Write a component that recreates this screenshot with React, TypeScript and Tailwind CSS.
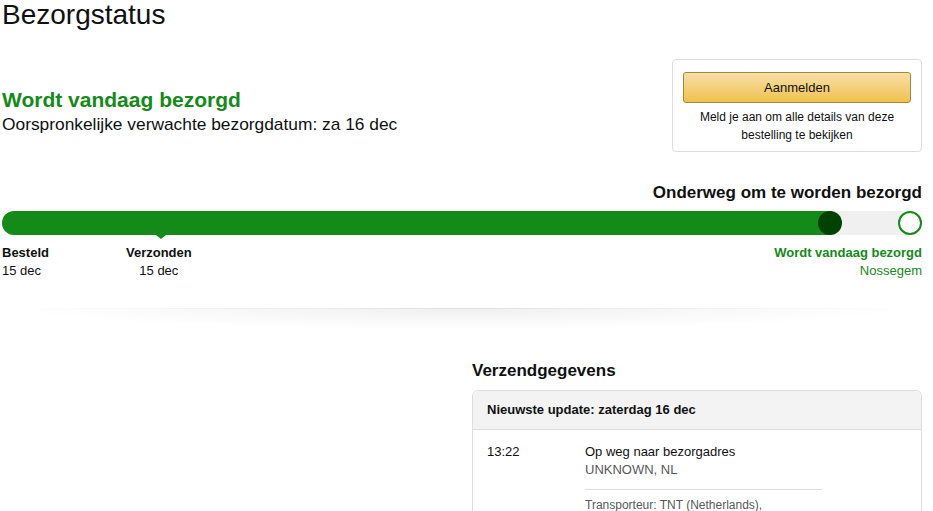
import React from 'react';

const GREEN = 'text-[#148a18]';

const Milestone: React.FC<{ title: string; date: string; className?: string }> = ({ title, date, className }) => (
  <div className={`flex flex-col text-[13px] leading-[18px] text-[#0f1111] ${className ?? ''}`}>
    <span className="font-bold">{title}</span>
    <span>{date}</span>
  </div>
);

export default function App() {
  return (
    <div className="bg-white h-[511px] overflow-hidden font-['Liberation_Sans',Arial,sans-serif] text-[#0f1111]">
      <div className="ml-[2px] w-[920px]">
        {/* Titel */}
        <h1 className="text-[28px] leading-[30px]">Bezorgstatus</h1>

        {/* Status + aanmelden */}
        <div className="flex justify-between mt-[29px]">
          <div className="pt-[28px]">
            <div className={`text-[21px] leading-[26px] font-bold ${GREEN}`}>Wordt vandaag bezorgd</div>
            <div className="text-[17.35px] leading-[22px]">Oorspronkelijke verwachte bezorgdatum: za 16 dec</div>
          </div>
          <div className="w-[250px] h-[93px] border border-[#dddddd] rounded-[4px] px-[10px] pt-[12px]">
            <button className="w-full h-[31px] rounded-[3px] border border-[#a88734] bg-gradient-to-b from-[#f7dfa5] to-[#f0c14b] text-[13px] text-[#111]">
              Aanmelden
            </button>
            <p className="text-[12px] leading-[18px] text-center mt-[5px]">
              Meld je aan om alle details van deze bestelling te bekijken
            </p>
          </div>
        </div>

        {/* Voortgang */}
        <div className="mt-[30px]">
          <div className="text-right text-[17px] leading-[22px] font-bold">Onderweg om te worden bezorgd</div>
          <div className="relative mt-[7px] h-[24px] rounded-full bg-[#f0f0f0]">
            <div className="absolute left-0 top-0 h-[24px] w-[838px] rounded-full bg-[#148a18]" />
            <div className="absolute left-[816px] top-0 h-[24px] w-[24px] rounded-full bg-[#004200]" />
            <div className="absolute right-0 top-0 h-[24px] w-[24px] rounded-full bg-white border-2 border-[#148a18]" />
            <div className="absolute left-[154px] top-[24px] w-0 h-0 border-l-[5px] border-r-[5px] border-t-[4px] border-l-transparent border-r-transparent border-t-[#148a18]" />
          </div>
          <div className="flex mt-[9px]">
            <Milestone title="Besteld" date="15 dec" />
            <Milestone title="Verzonden" date="15 dec" className="items-center ml-[77px]" />
            <div className={`ml-auto flex flex-col items-end text-[13px] leading-[18px] ${GREEN}`}>
              <span className="font-bold">Wordt vandaag bezorgd</span>
              <span>Nossegem</span>
            </div>
          </div>
        </div>

        {/* Schaduwlijn */}
        <div className="mt-[28px] mx-[12px]">
          <div className="h-px bg-[linear-gradient(to_right,rgba(0,0,0,0),rgba(0,0,0,0.12),rgba(0,0,0,0))]" />
          <div className="h-[20px] bg-[radial-gradient(ellipse_at_top,rgba(0,0,0,0.06),rgba(0,0,0,0)_70%)]" />
        </div>

        {/* Verzendgegevens */}
        <div className="grid grid-cols-[1fr_450px] mt-[31px]">
          <div />
          <div>
            <h2 className="text-[17px] leading-[22px] font-bold">Verzendgegevens</h2>
            <div className="mt-[8px] border border-[#dddddd] rounded-t-[6px]">
              <div className="h-[39px] bg-[#f3f3f3] border-b border-[#dddddd] px-[14px] flex items-center text-[13px] font-bold rounded-t-[6px]">
                Nieuwste update: zaterdag 16 dec
              </div>
              <div className="flex px-[14px] pt-[13px] pb-[20px] text-[13px] leading-[18px]">
                <div className="w-[98px]">13:22</div>
                <div className="w-[237px]">
                  <div>Op weg naar bezorgadres</div>
                  <div className="text-[#565959]">UNKNOWN, NL</div>
                  <div className="mt-[10px] border-t border-[#dddddd] pt-[6px] text-[12px] text-[#565959]">
                    Transporteur: TNT (Netherlands),
                  </div>
                </div>
              </div>
            </div>
          </div>
        </div>
      </div>
    </div>
  );
}
